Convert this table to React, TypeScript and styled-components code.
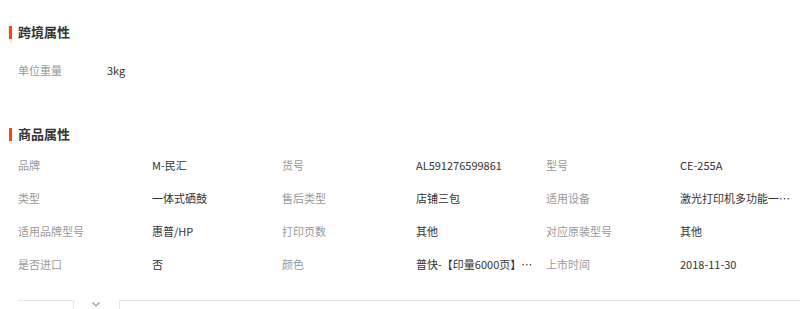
import React from 'react'
import styled, { createGlobalStyle } from 'styled-components'

const GlobalStyle = createGlobalStyle`
  html, body {
    margin: 0;
    padding: 0;
    background: #fff;
  }
  body {
    font-family: "Noto Sans CJK SC", "Liberation Sans", sans-serif;
    font-size: 11px;
    color: #333;
    overflow: hidden;
  }
`

type Attr = { label: string; value: string }

const crossBorder: Attr[] = [{ label: '单位重量', value: '3kg' }]

const productAttrs: Attr[] = [
  { label: '品牌', value: 'M-民汇' },
  { label: '货号', value: 'AL591276599861' },
  { label: '型号', value: 'CE-255A' },
  { label: '类型', value: '一体式硒鼓' },
  { label: '售后类型', value: '店铺三包' },
  { label: '适用设备', value: '激光打印机多功能一体机复印机' },
  { label: '适用品牌型号', value: '惠普/HP' },
  { label: '打印页数', value: '其他' },
  { label: '对应原装型号', value: '其他' },
  { label: '是否进口', value: '否' },
  { label: '颜色', value: '普快-【印量6000页】高清黑色' },
  { label: '上市时间', value: '2018-11-30' },
]

const App = () => {
  return (
    <Page>
      <GlobalStyle />
      <Title>跨境属性</Title>
      <SimpleRow>
        <Label $width={89}>{crossBorder[0].label}</Label>
        <Value>{crossBorder[0].value}</Value>
      </SimpleRow>

      <Title $gap={44}>商品属性</Title>
      <AttrGrid>
        {productAttrs.map((a) => (
          <AttrCell key={a.label}>
            <Label $width={134}>{a.label}</Label>
            <Value>{a.value}</Value>
          </AttrCell>
        ))}
      </AttrGrid>

      <TabBar>
        <TabLeft />
        <TabToggle>
          <svg width="8" height="5" viewBox="0 0 8 5">
            <path d="M0.5 0.5 L4 4 L7.5 0.5" fill="none" stroke="#8c9ab0" strokeWidth="1.2" />
          </svg>
        </TabToggle>
        <TabRight />
      </TabBar>
    </Page>
  )
}

const Page = styled.div`
  padding-top: 22px;
  width: 800px;
`

const Title = styled.h3<{ $gap?: number }>`
  position: relative;
  margin: ${(p) => p.$gap ?? 0}px 0 0;
  padding-left: 18px;
  height: 20px;
  line-height: 20px;
  font-size: 13px;
  font-weight: bold;
  color: #333;

  &::before {
    content: '';
    position: absolute;
    left: 9px;
    top: 4px;
    width: 3px;
    height: 13px;
    background: #ff4400;
  }
`

const SimpleRow = styled.div`
  display: flex;
  margin-top: 18px;
  padding-left: 18px;
  height: 20px;
  line-height: 20px;
`

const Label = styled.span<{ $width: number }>`
  flex: none;
  width: ${(p) => p.$width}px;
  color: #999;
`

const Value = styled.span`
  flex: 1;
  min-width: 0;
  color: #333;
  white-space: nowrap;
  overflow: hidden;
  text-overflow: ellipsis;
`

const AttrGrid = styled.div`
  display: grid;
  grid-template-columns: repeat(3, 264px);
  grid-auto-rows: 33px;
  margin-top: 4px;
  padding-left: 18px;
`

const AttrCell = styled.div`
  display: flex;
  align-items: center;
  padding-right: 12px;
  min-width: 0;
  line-height: 20px;
`

const TabBar = styled.div`
  display: flex;
  margin-top: 20px;
  padding-left: 18px;
  height: 12px;
`

const TabLeft = styled.div`
  width: 55px;
  border-top: 1px solid #e6e6e6;
  border-right: 1px solid #e6e6e6;
`

const TabToggle = styled.div`
  width: 45px;
  display: flex;
  justify-content: center;
  padding-top: 2px;
  line-height: 0;
  svg { margin-left: -2px; }
`

const TabRight = styled.div`
  flex: 1;
  border-top: 1px solid #e6e6e6;
  border-left: 1px solid #e6e6e6;
`

export default App
